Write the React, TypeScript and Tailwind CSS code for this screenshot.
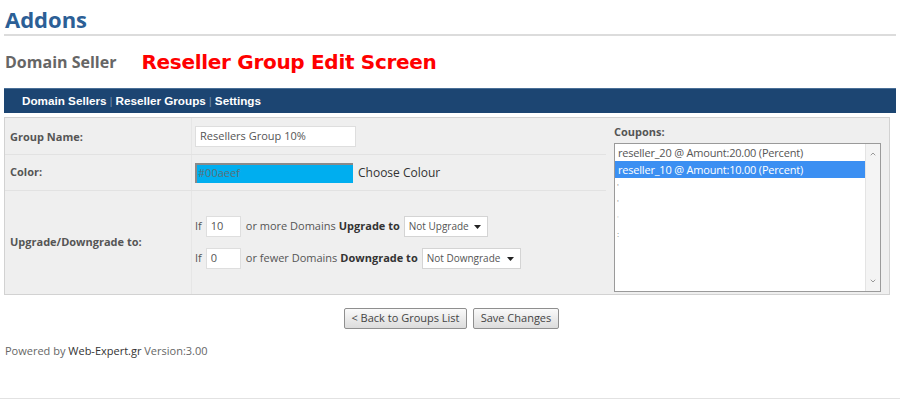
import { ChevronDown } from "lucide-react";

const body = { fontFamily: '"Open Sans", "DejaVu Sans", sans-serif' };

function Caret() {
  return (
    <svg width="7" height="4" viewBox="0 0 7 4" className="ml-auto shrink-0">
      <path d="M0 0 H7 L3.5 4 Z" fill="#222" />
    </svg>
  );
}

function Select({ label, width }: { label: string; width: string }) {
  return (
    <div
      className={`flex h-[21px] shrink-0 items-center border border-[#d4d4d4] bg-white pr-[6px] pl-[4px] text-[10px] whitespace-nowrap text-[#555] ${width}`}
    >
      <span>{label}</span>
      <Caret />
    </div>
  );
}

function App() {
  return (
    <div className="relative h-[399px] w-[900px] overflow-hidden bg-white" style={body}>
      <h1 className="pt-[5px] pl-[5px] text-[22px] leading-[28px] font-bold text-[#2c5f96]">
        Addons
      </h1>
      <div className="mx-[4px] mt-[1px] h-[2px] bg-[#dcdcdc]" />

      <div className="mt-[13px] flex h-[26px] items-center pl-[5px]">
        <span className="text-[16px] font-bold text-[#666]">Domain Seller</span>
        <span
          className="ml-[25px] text-[20px] font-bold text-[#ff0000]"
          style={{ fontFamily: '"DejaVu Sans", sans-serif', letterSpacing: "-0.3px" }}
        >
          Reseller Group Edit Screen
        </span>
      </div>

      <nav
        className="mx-[4px] mt-[13px] flex h-[25px] items-center border-t border-[#4a6f97] bg-[#1c4572] pl-[18px] text-[11.7px] font-bold whitespace-nowrap text-white"
        style={{ fontFamily: '"Liberation Sans", Arial, sans-serif' }}
      >
        <span>Domain Sellers</span>
        <span className="mx-[3px] font-normal text-[#6d87a5]">|</span>
        <span>Reseller Groups</span>
        <span className="mx-[3px] font-normal text-[#6d87a5]">|</span>
        <span>Settings</span>
      </nav>

      <div className="mt-[4px] ml-[4px] flex h-[178px] w-[886px] border border-[#d2d2d2] bg-[#efefef] text-[11px]">
        <div className="flex w-[601px] flex-col">
          <div className="flex h-[37px] border-b border-[#e2e2e2]">
            <div className="flex w-[187px] items-center border-r border-[#e6e6e6] pt-[2px] pl-[5px] font-bold text-[#555]">
              Group Name:
            </div>
            <div className="flex items-center pl-[3px]">
              <div className="flex h-[21px] w-[161px] items-center border border-[#dedede] bg-white pl-[4px] text-[#555]">
                Resellers Group 10%
              </div>
            </div>
          </div>
          <div className="flex h-[36px] border-b border-[#e2e2e2]">
            <div className="flex w-[187px] items-center border-r border-[#e6e6e6] pl-[5px] font-bold text-[#555]">
              Color:
            </div>
            <div className="flex items-center pl-[3px]">
              <div className="flex h-[20px] w-[158px] items-center border-t-2 border-l-2 border-[#8a8a8a] bg-[#00aeef] pl-[1px] text-[#5b6e78]">
                #00aeef
              </div>
              <span className="ml-[5px] text-[12px] text-[#333]">Choose Colour</span>
            </div>
          </div>
          <div className="flex flex-1">
            <div className="flex w-[187px] items-center border-r border-[#e6e6e6] pl-[5px] font-bold text-[#555]">
              Upgrade/Downgrade to:
            </div>
            <div className="flex flex-col justify-center gap-[11px] pl-[3px] whitespace-nowrap text-[#555]">
              <div className="flex items-center">
                <span>If</span>
                <div className="ml-[4px] flex h-[21px] w-[35px] items-center border border-[#dedede] bg-white pl-[4px]">
                  10
                </div>
                <span className="ml-[5px]">or more Domains</span>
                <b className="ml-[3px] text-[#333]">Upgrade to</b>
                <div className="ml-[4px]">
                  <Select label="Not Upgrade" width="w-[84px]" />
                </div>
              </div>
              <div className="flex items-center">
                <span>If</span>
                <div className="ml-[4px] flex h-[21px] w-[35px] items-center border border-[#dedede] bg-white pl-[4px]">
                  0
                </div>
                <span className="ml-[5px]">or fewer Domains</span>
                <b className="ml-[3px] text-[#333]">Downgrade to</b>
                <div className="ml-[4px]">
                  <Select label="Not Downgrade" width="w-[99px]" />
                </div>
              </div>
            </div>
          </div>
        </div>

        <div className="flex-1 pt-[6px] pl-[8px]">
          <div className="font-bold text-[#555]">Coupons:</div>
          <div className="mt-[2px] flex h-[149px] w-[267px] border border-[#9a9a9a] bg-white">
            <div className="flex-1 pt-[1px] text-[#555]">
              <div className="h-[16px] pl-[3px] leading-[16px] tracking-[-0.2px]">
                reseller_20 @ Amount:20.00 (Percent)
              </div>
              <div className="h-[17px] bg-[#3b8ff2] pl-[3px] leading-[17px] tracking-[-0.2px] text-white">
                reseller_10 @ Amount:10.00 (Percent)
              </div>
              <div className="pl-[2px] text-[8px] leading-[16px] text-[#888]">
                <div>'</div>
                <div>'</div>
                <div className="text-[#ccc]">'</div>
                <div>:</div>
              </div>
            </div>
            <div className="flex w-[15px] flex-col items-center justify-between border-l border-[#e4e4e4] bg-[#f4f4f4] py-[6px]">
              <ChevronDown className="h-[8px] w-[8px] rotate-180 text-[#999]" strokeWidth={3} />
              <ChevronDown className="h-[8px] w-[8px] text-[#999]" strokeWidth={3} />
            </div>
          </div>
        </div>
      </div>

      <div className="mt-[13px] flex justify-center gap-[6px] pl-[3px] text-[11px] text-[#444]">
        <button className="h-[21px] w-[123px] rounded-[2px] border border-[#8f8f8f] bg-gradient-to-b from-[#fafafa] to-[#dcdcdc]">
          &lt; Back to Groups List
        </button>
        <button className="h-[21px] w-[86px] rounded-[2px] border border-[#8f8f8f] bg-gradient-to-b from-[#fafafa] to-[#dcdcdc]">
          Save Changes
        </button>
      </div>

      <p className="mt-[14px] pl-[5px] text-[11px] text-[#666]">
        Powered by <span className="text-[#333]">Web-Expert.gr</span> Version:3.00
      </p>

      <div className="absolute right-0 bottom-0 left-0 h-px bg-[#e2e2e2]" />
    </div>
  );
}

export default App;
